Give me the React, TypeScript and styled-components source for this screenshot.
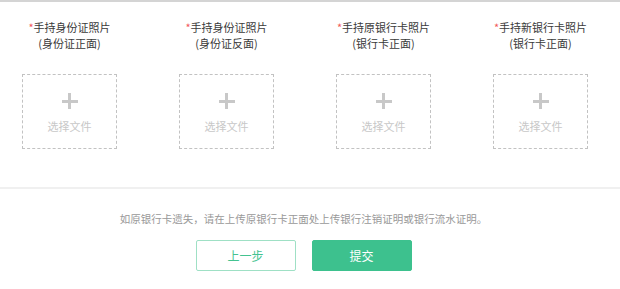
import { createGlobalStyle } from 'styled-components';
import styled from 'styled-components';

const GlobalStyle = createGlobalStyle`
  html, body {
    margin: 0;
    padding: 0;
    background: #ffffff;
    font-family: "Noto Sans CJK SC", "Liberation Sans", sans-serif;
  }
`;

const uploadList = [
  { title: '手持身份证照片', sub: '(身份证正面)' },
  { title: '手持身份证照片', sub: '(身份证反面)' },
  { title: '手持原银行卡照片', sub: '(银行卡正面)' },
  { title: '手持新银行卡照片', sub: '(银行卡正面)' },
];

export default function App() {
  return (
    <>
      <GlobalStyle />
      <S.Page>
        <S.UploadSection>
          <S.UploadRow>
            {uploadList.map((item, index) => (
              <S.UploadItem key={index}>
                <S.Title>
                  <S.Required>*</S.Required>
                  {item.title}
                  <br />
                  {item.sub}
                </S.Title>
                <S.FileBox type='button'>
                  <S.Plus />
                  <S.FileText>选择文件</S.FileText>
                </S.FileBox>
              </S.UploadItem>
            ))}
          </S.UploadRow>
        </S.UploadSection>
        <S.Footer>
          <S.Notice>如原银行卡遗失，请在上传原银行卡正面处上传银行注销证明或银行流水证明。</S.Notice>
          <S.ButtonRow>
            <S.Button $primary={false}>上一步</S.Button>
            <S.Button $primary>提交</S.Button>
          </S.ButtonRow>
        </S.Footer>
      </S.Page>
    </>
  );
}

const S = {
  Page: styled.div`
    width: 100%;
    border-top: 2px solid #d4d4d4;
  `,

  UploadSection: styled.div`
    border-bottom: 2px solid #f0f0f0;
  `,

  UploadRow: styled.div`
    width: 607px;
    box-sizing: border-box;
    display: flex;
    gap: 62px;
    padding: 17px 0 38px 22px;
  `,

  UploadItem: styled.div`
    width: 95px;
    display: flex;
    flex-direction: column;
    align-items: center;
  `,

  Title: styled.p`
    margin: 0;
    width: 130px;
    text-align: center;
    font-size: 11px;
    line-height: 16px;
    color: #3a3a3a;
    white-space: nowrap;
  `,

  Required: styled.span`
    color: #f25a5a;
  `,

  FileBox: styled.button`
    margin-top: 23px;
    width: 95px;
    height: 75px;
    box-sizing: border-box;
    border: 1px dashed #c2c2c2;
    background: #ffffff;
    padding: 0;
    display: flex;
    flex-direction: column;
    align-items: center;
    cursor: pointer;
  `,

  Plus: styled.span`
    position: relative;
    margin-top: 18px;
    width: 16px;
    height: 16px;

    &::before,
    &::after {
      content: '';
      position: absolute;
      background: #c8c8c8;
    }
    &::before {
      left: 0;
      top: 6.5px;
      width: 16px;
      height: 3px;
    }
    &::after {
      top: 0;
      left: 6.5px;
      width: 3px;
      height: 16px;
    }
  `,

  FileText: styled.span`
    margin-top: 10px;
    font-size: 11px;
    line-height: 14px;
    color: #c8c8c8;
    font-family: "Noto Sans CJK SC", sans-serif;
  `,

  Footer: styled.div`
    width: 607px;
    display: flex;
    flex-direction: column;
    align-items: center;
    padding-top: 22px;
  `,

  Notice: styled.p`
    margin: 0;
    font-size: 10.5px;
    line-height: 16px;
    color: #999999;
  `,

  ButtonRow: styled.div`
    display: flex;
    gap: 16px;
    margin-top: 13px;
  `,

  Button: styled.button<{ $primary: boolean }>`
    width: 100px;
    height: 31px;
    box-sizing: border-box;
    border-radius: 2px;
    font-family: "Noto Sans CJK SC", sans-serif;
    font-size: 12px;
    cursor: pointer;
    border: 1px solid ${({ $primary }) => ($primary ? '#3dc18e' : '#9fe0c5')};
    background: ${({ $primary }) => ($primary ? '#3dc18e' : '#ffffff')};
    color: ${({ $primary }) => ($primary ? '#ffffff' : '#44c390')};
  `,
};
